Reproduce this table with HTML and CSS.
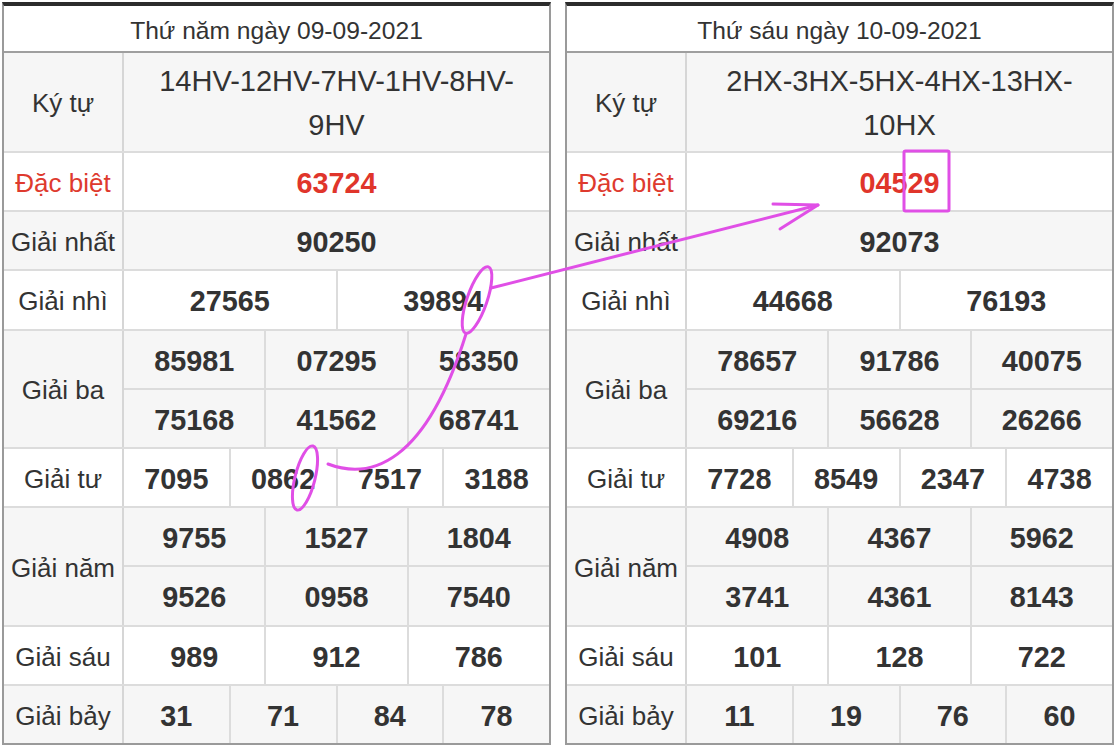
FILE: index.html
```html
<!DOCTYPE html>
<html lang="vi">
<head>
<meta charset="utf-8">
<title>Kết quả xổ số</title>
<link rel="stylesheet" href="styles.css">
</head>
<body>
<div class="page">
  <div class="board">
    <div class="head">Thứ năm ngày 09-09-2021</div>
    <div class="row gray tall">
      <div class="label">Ký tự</div>
      <div class="vals"><div class="line code"><div class="cell">14HV-12HV-7HV-1HV-8HV-9HV</div></div></div>
    </div>
    <div class="row">
      <div class="label red">Đặc biệt</div>
      <div class="vals"><div class="line"><div class="cell num red">63724</div></div></div>
    </div>
    <div class="row gray">
      <div class="label">Giải nhất</div>
      <div class="vals"><div class="line"><div class="cell num">90250</div></div></div>
    </div>
    <div class="row">
      <div class="label">Giải nhì</div>
      <div class="vals"><div class="line"><div class="cell num">27565</div><div class="cell num">39894</div></div></div>
    </div>
    <div class="row gray">
      <div class="label">Giải ba</div>
      <div class="vals">
        <div class="line"><div class="cell num">85981</div><div class="cell num">07295</div><div class="cell num">58350</div></div>
        <div class="line"><div class="cell num">75168</div><div class="cell num">41562</div><div class="cell num">68741</div></div>
      </div>
    </div>
    <div class="row">
      <div class="label">Giải tư</div>
      <div class="vals"><div class="line"><div class="cell num">7095</div><div class="cell num">0862</div><div class="cell num">7517</div><div class="cell num">3188</div></div></div>
    </div>
    <div class="row gray">
      <div class="label">Giải năm</div>
      <div class="vals">
        <div class="line"><div class="cell num">9755</div><div class="cell num">1527</div><div class="cell num">1804</div></div>
        <div class="line"><div class="cell num">9526</div><div class="cell num">0958</div><div class="cell num">7540</div></div>
      </div>
    </div>
    <div class="row">
      <div class="label">Giải sáu</div>
      <div class="vals"><div class="line"><div class="cell num">989</div><div class="cell num">912</div><div class="cell num">786</div></div></div>
    </div>
    <div class="row gray">
      <div class="label">Giải bảy</div>
      <div class="vals"><div class="line"><div class="cell num">31</div><div class="cell num">71</div><div class="cell num">84</div><div class="cell num">78</div></div></div>
    </div>
  </div>

  <div class="board">
    <div class="head">Thứ sáu ngày 10-09-2021</div>
    <div class="row gray tall">
      <div class="label">Ký tự</div>
      <div class="vals"><div class="line code"><div class="cell">2HX-3HX-5HX-4HX-13HX-10HX</div></div></div>
    </div>
    <div class="row">
      <div class="label red">Đặc biệt</div>
      <div class="vals"><div class="line"><div class="cell num red">04529</div></div></div>
    </div>
    <div class="row gray">
      <div class="label">Giải nhất</div>
      <div class="vals"><div class="line"><div class="cell num">92073</div></div></div>
    </div>
    <div class="row">
      <div class="label">Giải nhì</div>
      <div class="vals"><div class="line"><div class="cell num">44668</div><div class="cell num">76193</div></div></div>
    </div>
    <div class="row gray">
      <div class="label">Giải ba</div>
      <div class="vals">
        <div class="line"><div class="cell num">78657</div><div class="cell num">91786</div><div class="cell num">40075</div></div>
        <div class="line"><div class="cell num">69216</div><div class="cell num">56628</div><div class="cell num">26266</div></div>
      </div>
    </div>
    <div class="row">
      <div class="label">Giải tư</div>
      <div class="vals"><div class="line"><div class="cell num">7728</div><div class="cell num">8549</div><div class="cell num">2347</div><div class="cell num">4738</div></div></div>
    </div>
    <div class="row gray">
      <div class="label">Giải năm</div>
      <div class="vals">
        <div class="line"><div class="cell num">4908</div><div class="cell num">4367</div><div class="cell num">5962</div></div>
        <div class="line"><div class="cell num">3741</div><div class="cell num">4361</div><div class="cell num">8143</div></div>
      </div>
    </div>
    <div class="row">
      <div class="label">Giải sáu</div>
      <div class="vals"><div class="line"><div class="cell num">101</div><div class="cell num">128</div><div class="cell num">722</div></div></div>
    </div>
    <div class="row gray">
      <div class="label">Giải bảy</div>
      <div class="vals"><div class="line"><div class="cell num">11</div><div class="cell num">19</div><div class="cell num">76</div><div class="cell num">60</div></div></div>
    </div>
  </div>

  <svg class="marks" width="1116" height="749" viewBox="0 0 1116 749" aria-hidden="true">
    <g fill="none" stroke="#e04fe6" stroke-width="3" stroke-linecap="round" stroke-linejoin="round">
      <ellipse cx="477" cy="300" rx="10" ry="35" transform="rotate(19 477 300)"/>
      <ellipse cx="305" cy="478" rx="10" ry="33" transform="rotate(14 305 478)"/>
      <path d="M491 288 L818 205"/>
      <path d="M773 204 L818 205 L780 229"/>
      <path d="M328 464 C370 480 425 465 466 334"/>
      <rect x="904" y="151" width="45" height="60" rx="1.5"/>
    </g>
  </svg>
</div>
</body>
</html>
```

FILE: styles.css
```css
* { box-sizing: border-box; }

html, body {
  margin: 0;
  padding: 0;
  background: #ffffff;
}

body {
  font-family: "Liberation Sans", Arial, Helvetica, sans-serif;
  color: #333333;
}

.page {
  position: relative;
  width: 1116px;
  height: 749px;
  padding: 2px 2px 0 2px;
  display: flex;
  gap: 14px;
  align-items: flex-start;
}

.board {
  width: 549px;
  border-left: 2px solid #9a9a9a;
  border-right: 2px solid #9a9a9a;
  border-bottom: 2px solid #9a9a9a;
  border-top: 4px solid #2c2c2c;
  background: #ffffff;
}

.head {
  height: 47px;
  border-bottom: 2px solid #9f9f9f;
  display: flex;
  align-items: center;
  justify-content: center;
  font-size: 24.6px;
  color: #333333;
  padding-top: 4px;
}

.row {
  display: flex;
  border-bottom: 2px solid #dcdcdc;
  background: #ffffff;
}

.row:last-child {
  border-bottom: none;
}

.row.gray {
  background: #f6f6f6;
}

.label {
  flex: 0 0 120px;
  border-right: 2px solid #d6d6d6;
  display: flex;
  align-items: center;
  justify-content: center;
  font-size: 26px;
  color: #333333;
  padding-top: 4px;
}

.tall .label {
  padding-top: 2px;
}

.label.red {
  color: #de3a2e;
}

.vals {
  flex: 1;
  display: flex;
  flex-direction: column;
  min-width: 0;
}

.line {
  display: flex;
  height: 57.2px;
}

.line + .line {
  border-top: 2px solid #dcdcdc;
  height: 59.2px;
}

.tall .line {
  height: 98px;
}

.cell {
  flex: 1 1 0;
  min-width: 0;
  display: flex;
  align-items: center;
  justify-content: center;
  border-right: 2px solid #dcdcdc;
}

.cell:last-child {
  border-right: none;
}

.code .cell {
  font-size: 29px;
  line-height: 44px;
  text-align: center;
  padding: 1px 10px 0 10px;
  color: #333333;
}

.num {
  font-size: 28.8px;
  font-weight: bold;
  color: #333333;
  padding-top: 4px;
}

.num.red {
  color: #e0352b;
}

.marks {
  position: absolute;
  left: 0;
  top: 0;
  pointer-events: none;
}
```
